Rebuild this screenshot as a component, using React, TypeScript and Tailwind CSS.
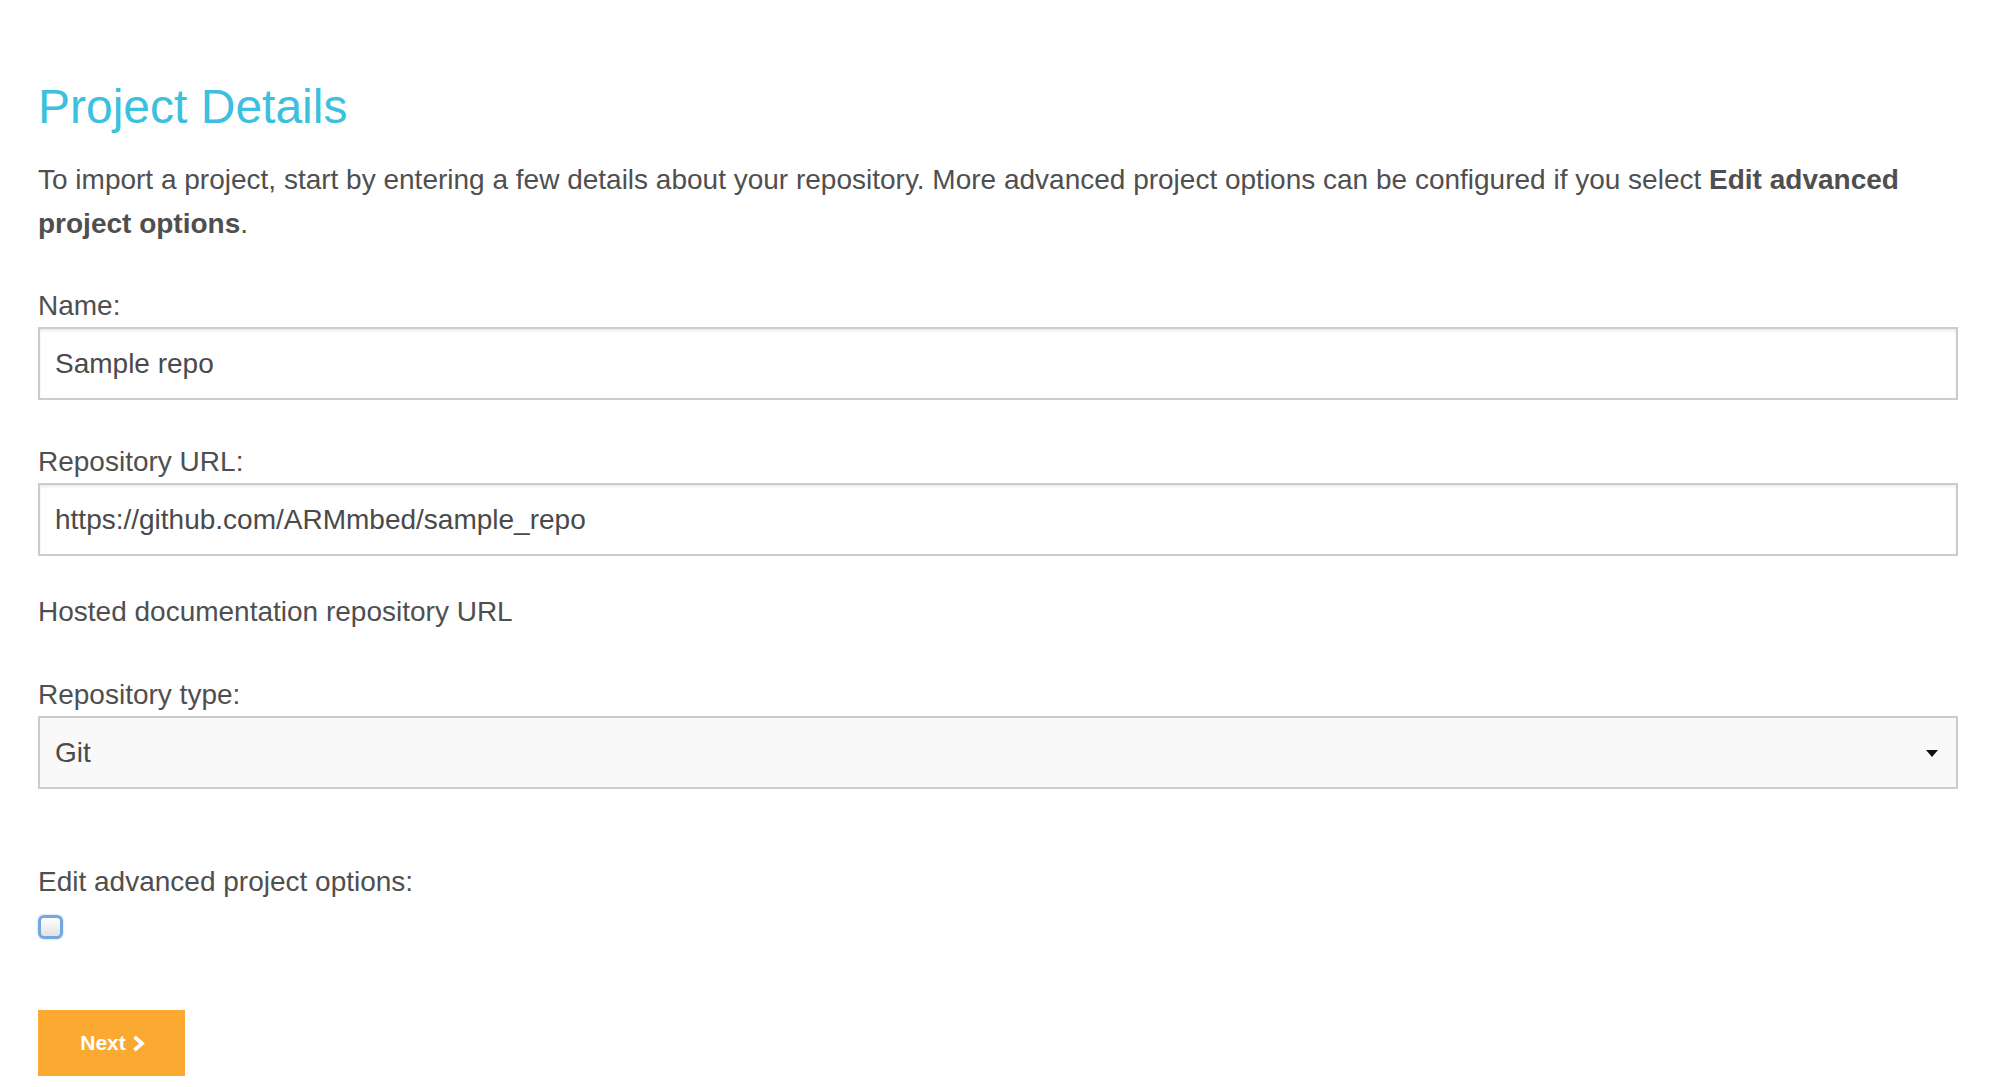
import React from "react";

function Field({ label, value }: { label: string; value: string }) {
  return (
    <div>
      <label className="block text-[28px] leading-[42px]">{label}</label>
      <input
        readOnly
        value={value}
        className="block h-[73px] w-full border-2 border-[#cccccc] bg-white px-[15px] text-[28px] text-[#4a4a4a] shadow-[inset_0_2px_3px_rgba(0,0,0,0.08)] outline-none font-['Liberation_Sans',Arial,sans-serif]"
      />
    </div>
  );
}

export default function App() {
  return (
    <div className="min-h-screen bg-white pl-[38px] pr-[53px] pt-[80px] pb-[10px] font-['Liberation_Sans',Arial,sans-serif] text-[#4f4f4f]">
      <h1 className="text-[48px] leading-[53px] text-[#3bc0de]">Project Details</h1>
      <p className="mt-[25px] text-[28px] leading-[44px]">
        To import a project, start by entering a few details about your repository. More advanced project options can be configured if you select{" "}
        <b className="font-bold">Edit advanced project options</b>.
      </p>

      <div className="mt-[39px]">
        <Field label="Name:" value="Sample repo" />
      </div>
      <div className="mt-[41px]">
        <Field label="Repository URL:" value="https://github.com/ARMmbed/sample_repo" />
      </div>
      <p className="mt-[35px] text-[28px] leading-[42px]">Hosted documentation repository URL</p>

      <div className="mt-[41px]">
        <label className="block text-[28px] leading-[42px]">Repository type:</label>
        <div className="flex h-[73px] w-full items-center justify-between border-2 border-[#cccccc] bg-[#f9f9f9] pl-[15px] pr-[18px] text-[28px] text-[#4a4a4a]">
          <span>Git</span>
          <svg width="12" height="7" viewBox="0 0 12 7" className="mt-[2px]">
            <path d="M0 0 L12 0 L6 7 Z" fill="#111111" />
          </svg>
        </div>
      </div>

      <div className="mt-[72px]">
        <label className="block text-[28px] leading-[42px]">Edit advanced project options:</label>
        <div className="mt-[12px] h-[24px] w-[25px] rounded-[6px] border-[3px] border-[#74a6e2] bg-gradient-to-b from-white to-[#e2e2e2] shadow-[0_0_2px_rgba(90,150,220,0.6)]" />
      </div>

      <button className="mt-[71px] flex h-[66px] w-[147px] items-center justify-center gap-[6px] bg-[#fba930] pl-[2px] text-[21px] font-bold text-white">
        <span>Next</span>
        <svg width="13" height="17" viewBox="0 0 13 17">
          <path d="M2.5 1.8 L10 8.5 L2.5 15.2" fill="none" stroke="white" strokeWidth="3.8" strokeLinejoin="miter" />
        </svg>
      </button>
    </div>
  );
}
